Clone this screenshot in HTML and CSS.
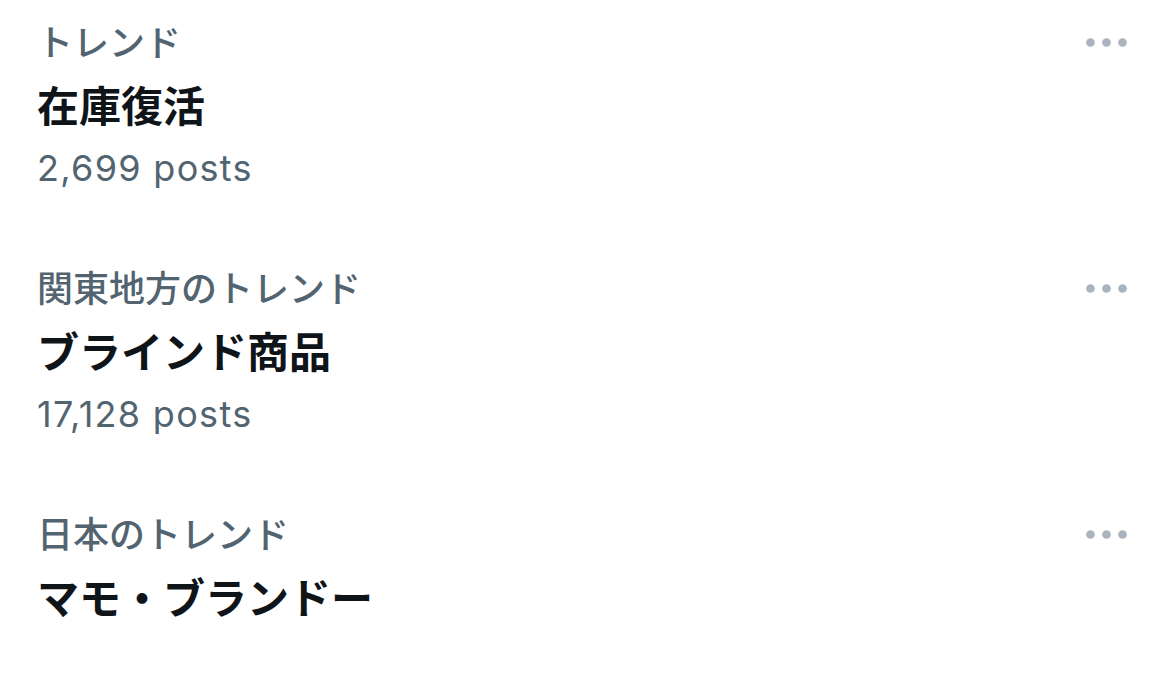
FILE: index.html
```html
<!DOCTYPE html>
<html lang="ja">
<head>
    <meta charset="UTF-8">
    <meta name="viewport" content="width=device-width, initial-scale=1.0">
    <title>トレンド</title>
    <link rel="stylesheet" href="styles.css">
</head>
<body>
    <div class="trend-list">
        <div class="trend">
            <div class="trend-text">
                <div class="trend-context">トレンド</div>
                <div class="trend-name">在庫復活</div>
                <div class="trend-count">2,699 posts</div>
            </div>
            <button class="more" aria-label="More">
                <svg viewBox="0 0 24 24"><circle cx="5" cy="12" r="1.9"/><circle cx="12" cy="12" r="1.9"/><circle cx="19" cy="12" r="1.9"/></svg>
            </button>
        </div>
        <div class="trend">
            <div class="trend-text">
                <div class="trend-context">関東地方のトレンド</div>
                <div class="trend-name">ブラインド商品</div>
                <div class="trend-count">17,128 posts</div>
            </div>
            <button class="more" aria-label="More">
                <svg viewBox="0 0 24 24"><circle cx="5" cy="12" r="1.9"/><circle cx="12" cy="12" r="1.9"/><circle cx="19" cy="12" r="1.9"/></svg>
            </button>
        </div>
        <div class="trend">
            <div class="trend-text">
                <div class="trend-context">日本のトレンド</div>
                <div class="trend-name">マモ・ブランドー</div>
            </div>
            <button class="more" aria-label="More">
                <svg viewBox="0 0 24 24"><circle cx="5" cy="12" r="1.9"/><circle cx="12" cy="12" r="1.9"/><circle cx="19" cy="12" r="1.9"/></svg>
            </button>
        </div>
    </div>
</body>
</html>
```

FILE: styles.css
```css
body {
    margin: 0;
    background-color: white;
    font-family: Inter, "Noto Sans CJK JP", sans-serif;
}
.trend-list {
    padding: 14px 36px 0 37px;
}
.trend {
    display: flex;
    justify-content: space-between;
    align-items: flex-start;
    margin-bottom: 66px;
}
.trend-context {
    font-size: 36px;
    font-weight: 500;
    line-height: 58px;
    color: #536471;
}
.trend-name {
    font-size: 42px;
    font-weight: 700;
    line-height: 70px;
    color: #0f1419;
}
.trend-count {
    font-size: 36px;
    line-height: 52px;
    letter-spacing: 1.3px;
    color: #536471;
}
.more {
    width: 55px;
    height: 55px;
    padding: 0;
    margin-top: 1px;
    border: none;
    background: none;
}
.more svg {
    display: block;
    width: 55px;
    height: 55px;
    fill: #a9b4be;
}
```
